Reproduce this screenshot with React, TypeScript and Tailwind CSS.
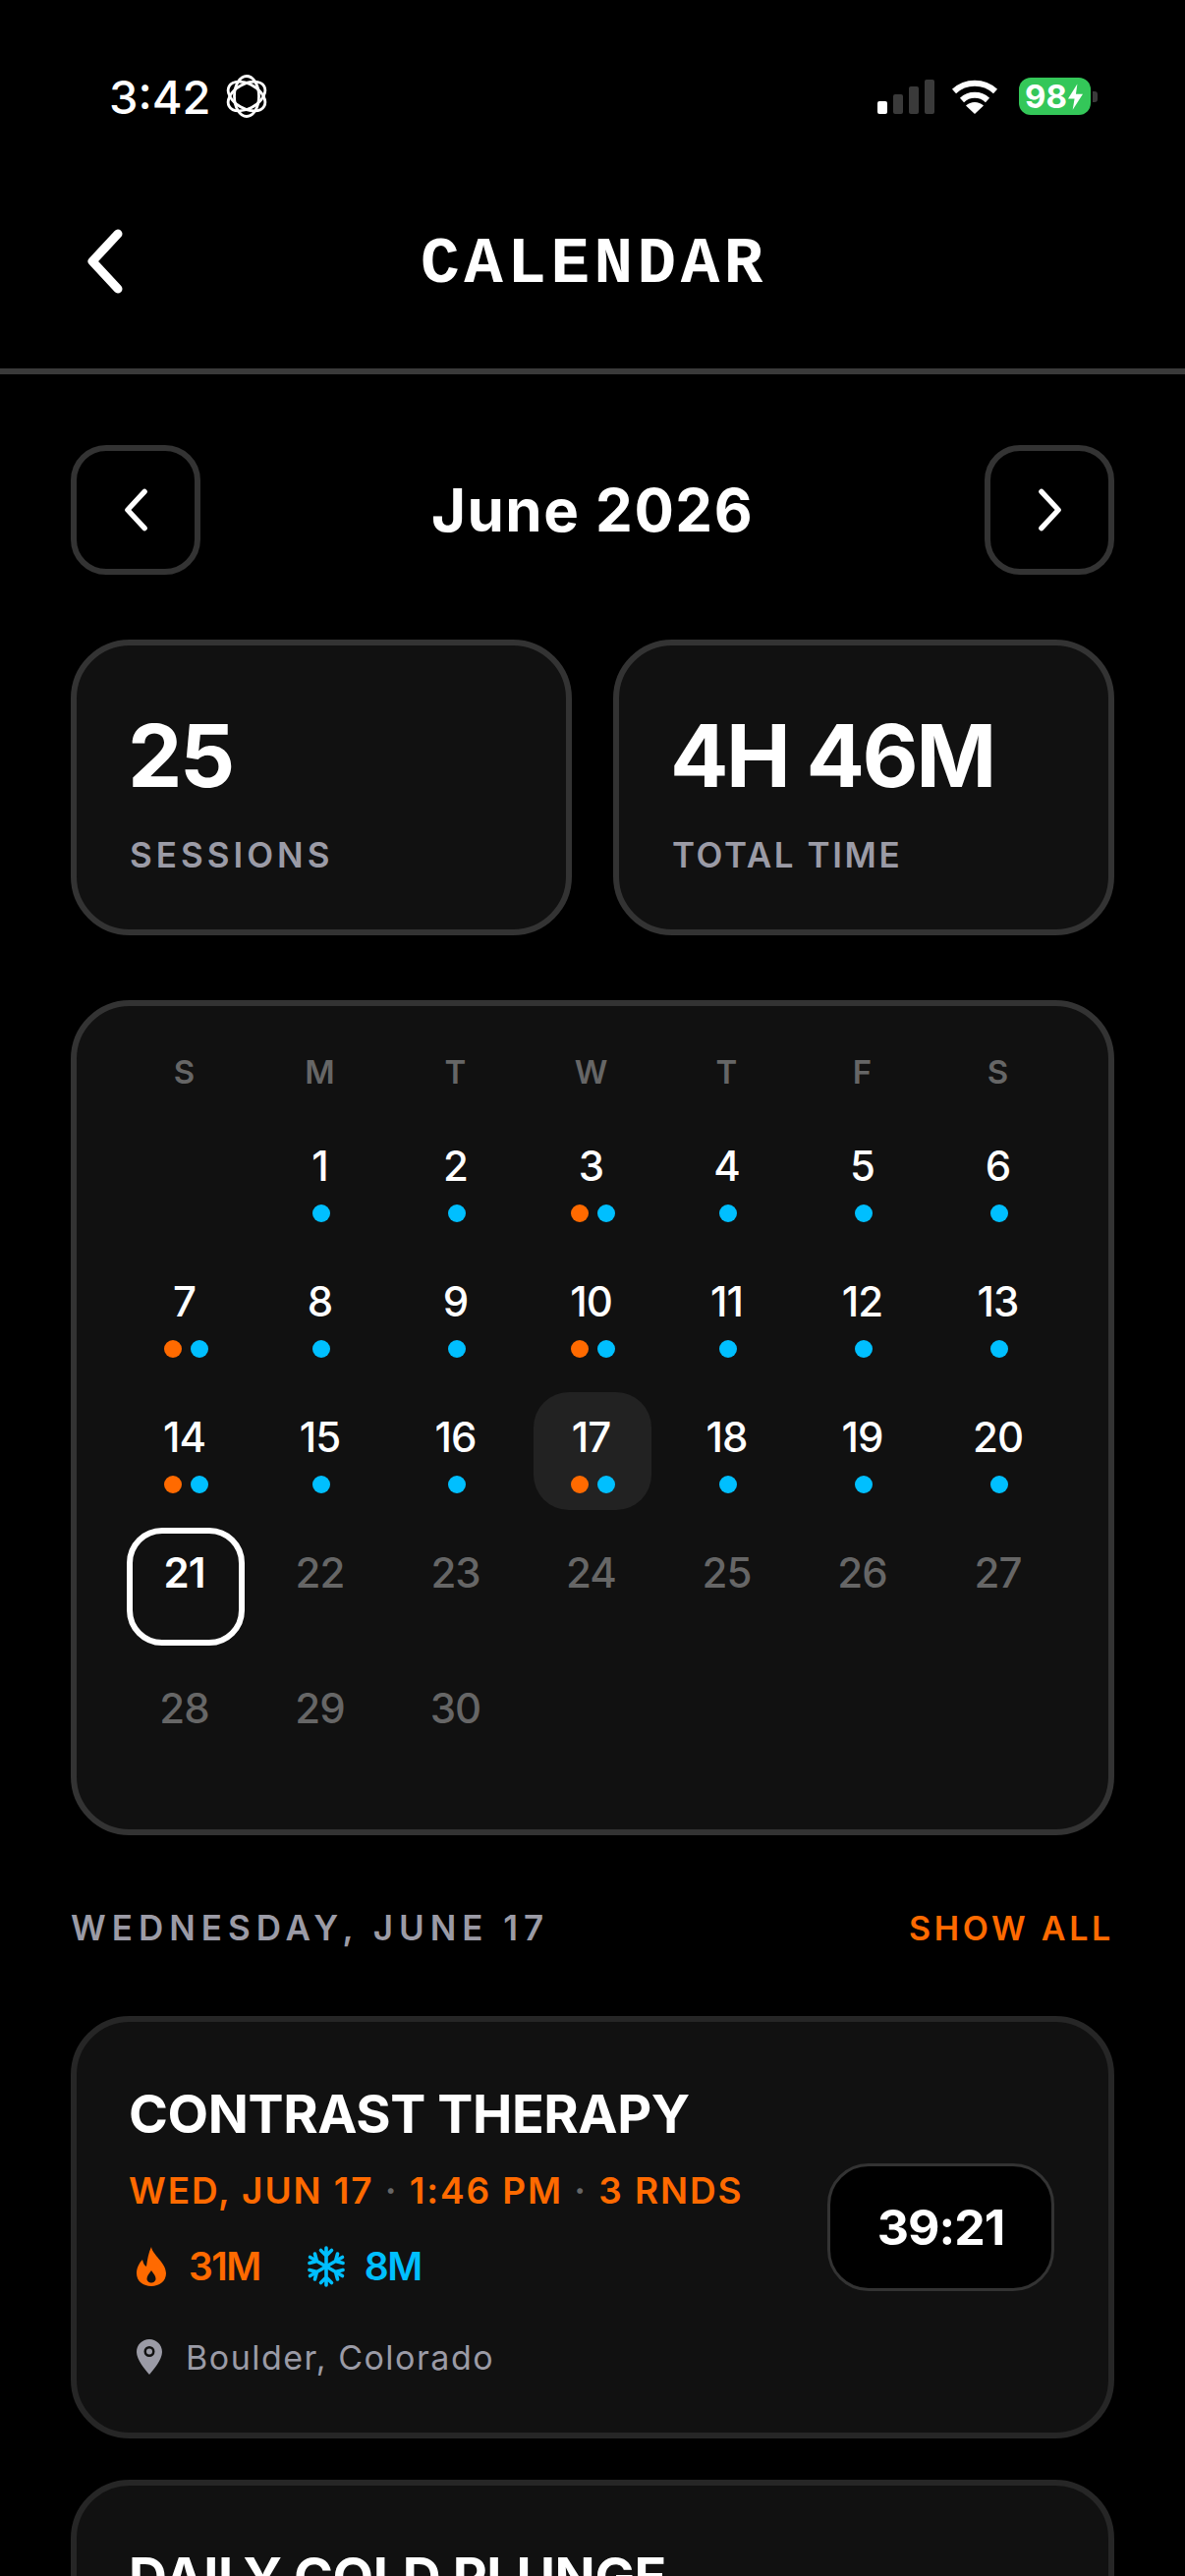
import React from "react";

const Flame = ({ className = "" }: { className?: string }) => (
  <svg viewBox="0 0 30 40" className={className} fill="#ff6a00">
    <path fillRule="evenodd" d="M15 0C16 8 30 16 30 27C30 35 23 40 15 40C7 40 0 35 0 27C0 21 3 16 6 13C7 17 8 19 10 20C11 13 12 6 15 0ZM15 24C12 28 10.500 30 10.500 32.500C10.500 35 13 36.500 15 36.500C17 36.500 19.500 35 19.500 32.500C19.500 30 18 28 15 24Z" />
  </svg>
);

const Flake = ({ className = "" }: { className?: string }) => (
  <svg viewBox="0 0 40 42" className={className} fill="none" stroke="#00bfff" strokeWidth="3.6" strokeLinecap="round" strokeLinejoin="round">
    {[0, 60, 120].map((r) => (
      <g key={r} transform={`rotate(${r} 20 21)`}>
        <path d="M20 2V40M14.500 4.500L20 10L25.500 4.500M14.500 37.500L20 32L25.500 37.500" />
      </g>
    ))}
  </svg>
);

const Pin = ({ className = "" }: { className?: string }) => (
  <svg viewBox="0 0 26 36" className={className} fill="#9b9ba6">
    <path fillRule="evenodd" d="M13 0C6 0 0 5.500 0 13C0 21 9 31 13 36C17 31 26 21 26 13C26 5.500 20 0 13 0ZM13 7A5.500 5.500 0 1 1 13 18A5.500 5.500 0 1 1 13 7Z" />
    <circle cx="13" cy="12.500" r="3" />
  </svg>
);

const Chevron = ({ dir, className = "", sw = 5 }: { dir: "l" | "r"; className?: string; sw?: number }) => (
  <svg viewBox="0 0 36 66" className={className} fill="none" stroke="#fff" strokeWidth={sw} strokeLinecap="round" strokeLinejoin="round">
    <path d={dir === "l" ? "M31 5L5 33L31 61" : "M5 5L31 33L5 61"} />
  </svg>
);

const Dot = ({ c }: { c: "o" | "b" }) => (
  <span className={c === "o" ? "block w-[18px] h-[18px] rounded-full bg-[#ff6a00]" : "block w-[18px] h-[18px] rounded-full bg-[#00bfff]"} />
);

const Cell = ({ d }: { d: number | null }) => {
  if (d === null) return <div className="h-[120px]" />;
  const future = d > 21;
  const both = [3, 7, 10, 14, 17].includes(d);
  const box =
    d === 17 ? "bg-[#222222] rounded-[36px]" : d === 21 ? "border-[6px] border-white rounded-[36px]" : "";
  return (
    <div className={`relative h-[120px] flex flex-col items-center ${box}`}>
      <span
        className={`absolute left-0 right-[3px] text-center leading-[50px] text-[42px] font-medium tracking-[-1px] ${
          future ? "text-[#666666]" : "text-white"
        } ${d === 21 ? "top-[15px] font-semibold" : "top-[21px]"}`}
      >
        {d}
      </span>
      {!future && d !== 21 && (
        <div className="absolute top-[85px] left-0 right-0 flex justify-center gap-[9px]">
          {both && <Dot c="o" />}
          <Dot c="b" />
        </div>
      )}
    </div>
  );
};

const days: (number | null)[] = [null, ...Array.from({ length: 30 }, (_, i) => i + 1)];

export default function App() {
  return (
    <div className="w-[1206px] h-[2622px] overflow-hidden bg-black text-white font-['Inter','Liberation_Sans',sans-serif]">
      {/* status bar */}
      <div className="h-[198px] flex justify-between items-start pl-[111px] pr-[89px] pt-[72px]">
        <div className="flex items-center gap-[14px] h-[52px]">
          <span className="text-[47px] font-medium leading-none">3:42</span>
          <svg viewBox="0 0 44 44" className="w-[44px] h-[44px]" fill="none" stroke="#fff" strokeWidth="2.800">
            {[30, 90, 150].map((r) => (
              <ellipse key={r} cx="22" cy="22" rx="20.500" ry="12.500" transform={`rotate(${r} 22 22)`} />
            ))}
          </svg>
        </div>
        <div className="flex items-center h-[52px]">
          <div className="flex items-end gap-[6px] h-[35px]">
            <span className="w-[10px] h-[13px] rounded-[2px] bg-white" />
            <span className="w-[10px] h-[20px] rounded-[2px] bg-[#3a3a3a]" />
            <span className="w-[10px] h-[28px] rounded-[2px] bg-[#3a3a3a]" />
            <span className="w-[10px] h-[35px] rounded-[2px] bg-[#3a3a3a]" />
          </div>
          <svg viewBox="0 0 48 36" className="w-[48px] h-[36px] ml-[17px]" fill="none" stroke="#fff" strokeWidth="6">
            <path d="M3 13A31 31 0 0 1 45 13" />
            <path d="M11 22A19 19 0 0 1 37 22" />
            <path d="M24 36L15 27.500A13 13 0 0 1 33 27.500Z" fill="#fff" stroke="none" />
          </svg>
          <div className="ml-[21px] w-[73px] h-[38px] rounded-[12px] bg-[#34c759] flex items-center pl-[6px] text-[33px] font-bold leading-none">
            <span>98</span>
            <svg viewBox="0 0 16 28" className="w-[15px] h-[27px] ml-[1px]" fill="#fff">
              <path d="M10 0L0 16H7L5 28L16 11H8.500Z" />
            </svg>
          </div>
          <span className="ml-[2px] w-[5px] h-[11px] rounded-r-[3px] bg-[#3a3a3a]" />
        </div>
      </div>

      {/* header */}
      <div className="relative h-[183px] border-b-[6px] border-[#3a3a3a] flex justify-center">
        <Chevron dir="l" sw={9} className="absolute left-[89px] top-[35px] w-[36px] h-[66px]" />
        <h1 className="mt-[32px] ml-[3px] h-[80px] text-[66px] leading-[80px] font-bold tracking-[4.500px] font-['Liberation_Mono',monospace]">
          CALENDAR
        </h1>
      </div>

      <main className="px-[72px] pt-[72px]">
        {/* month nav */}
        <div className="flex items-center justify-between h-[132px]">
          <button className="w-[132px] h-[132px] rounded-[36px] border-[6px] border-[#333333] flex items-center justify-center">
            <Chevron dir="l" sw={8} className="w-[25px] h-[44px]" />
          </button>
          <span className="text-[60px] font-bold leading-none tracking-[1.500px]">June 2026</span>
          <button className="w-[132px] h-[132px] rounded-[36px] border-[6px] border-[#333333] flex items-center justify-center">
            <Chevron dir="r" sw={8} className="w-[25px] h-[44px]" />
          </button>
        </div>

        {/* stats */}
        <div className="mt-[66px] grid grid-cols-2 gap-[42px]">
          <div className="h-[301px] rounded-[60px] border-[6px] border-[#333333] bg-[#111111] pl-[52px] pt-[66px]">
            <div className="text-[88px] font-bold leading-[92px] tracking-[-2.500px]">25</div>
            <div className="mt-[33px] ml-[2px] text-[35px] font-semibold leading-[44px] tracking-[4px] text-[#9b9ba6]">SESSIONS</div>
          </div>
          <div className="h-[301px] rounded-[60px] border-[6px] border-[#333333] bg-[#111111] pl-[52px] pt-[66px]">
            <div className="text-[88px] font-bold leading-[92px] tracking-[-2.500px]">4H 46M</div>
            <div className="mt-[33px] ml-[2px] text-[35px] font-semibold leading-[44px] tracking-[2.600px] text-[#9b9ba6]">TOTAL TIME</div>
          </div>
        </div>

        {/* calendar */}
        <div className="mt-[66px] h-[850px] rounded-[60px] border-[6px] border-[#333333] bg-[#111111] px-[51px] pt-[43px]">
          <div className="grid grid-cols-7 gap-x-[18px] h-[44px] items-center text-center text-[33px] font-semibold text-[#666666]">
            {["S", "M", "T", "W", "T", "F", "S"].map((d, i) => (
              <span key={i} className="pr-[3px]">{d}</span>
            ))}
          </div>
          <div className="mt-[30px] grid grid-cols-7 gap-x-[18px] gap-y-[18px]">
            {days.map((d, i) => (
              <Cell key={i} d={d} />
            ))}
          </div>
        </div>

        {/* section heading */}
        <div className="mt-[72px] h-[44px] flex items-center justify-between">
          <span className="text-[35px] font-semibold tracking-[6px] text-[#9b9ba6]">WEDNESDAY, JUNE 17</span>
          <span className="text-[34px] font-semibold tracking-[3.700px] text-[#ff6a00]">SHOW ALL</span>
        </div>

        {/* session card */}
        <div className="mt-[68px] h-[430px] rounded-[60px] border-[6px] border-[#262626] bg-[#111111] pl-[53px] pr-[55px] flex justify-between">
          <div className="pt-[62px]">
            <div className="text-[54px] font-bold leading-[64px] tracking-[-0.400px]">CONTRAST THERAPY</div>
            <div className="mt-[23px] text-[37px] font-semibold leading-[46px] tracking-[1.900px] text-[#ff6a00]">
              WED, JUN 17 <span className="text-[#666666]">·</span> 1:46 PM <span className="text-[#666666]">·</span> 3 RNDS
            </div>
            <div className="mt-[32px] flex items-center h-[44px] pl-[8px] text-[39px] font-semibold tracking-[-1.500px]">
              <Flame className="w-[30px] h-[40px]" />
              <span className="ml-[23px] text-[#ff6a00]">31M</span>
              <Flake className="ml-[47px] w-[40px] h-[42px]" />
              <span className="ml-[19px] text-[#00bfff]">8M</span>
            </div>
            <div className="mt-[48px] flex items-center h-[44px] pl-[8px]">
              <Pin className="w-[26px] h-[36px]" />
              <span className="ml-[24px] text-[34px] tracking-[1.500px] text-[#9b9ba6]">Boulder, Colorado</span>
            </div>
          </div>
          <div className="self-center w-[231px] h-[130px] rounded-[42px] border-[3px] border-[#333333] bg-black flex items-center justify-center text-[50px] font-bold tracking-[-1px]">
            39:21
          </div>
        </div>

        {/* next card */}
        <div className="mt-[42px] h-[430px] rounded-[60px] border-[6px] border-[#262626] bg-[#111111] pl-[53px] pt-[61px]">
          <div className="text-[54px] font-bold leading-[64px] tracking-[-0.400px]">DAILY COLD PLUNGE</div>
        </div>
      </main>
    </div>
  );
}
